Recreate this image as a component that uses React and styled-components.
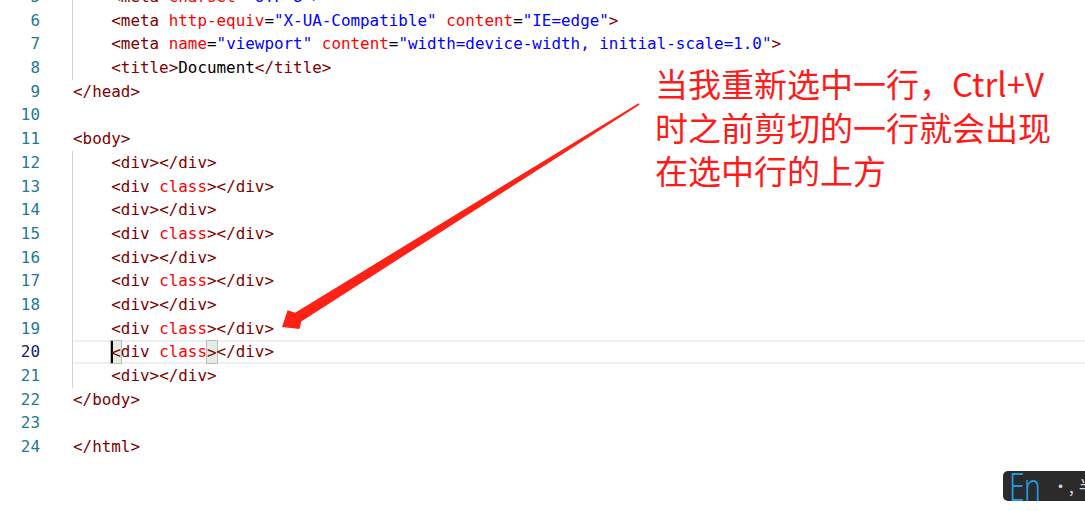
import React from 'react';
import styled, { createGlobalStyle } from 'styled-components';

const LINE_H = 23.7;

const GlobalStyle = createGlobalStyle`
  html, body {
    margin: 0;
    padding: 0;
    background: #ffffff;
  }
`;

// source lines shown in the editor (5 is cut off at the top)
const lines = [
  { n: 5, src: '    <meta charset="UTF-8">', guide: true },
  { n: 6, src: '    <meta http-equiv="X-UA-Compatible" content="IE=edge">', guide: true },
  { n: 7, src: '    <meta name="viewport" content="width=device-width, initial-scale=1.0">', guide: true },
  { n: 8, src: '    <title>Document</title>', guide: true },
  { n: 9, src: '</head>' },
  { n: 10, src: '' },
  { n: 11, src: '<body>' },
  { n: 12, src: '    <div></div>', guide: true },
  { n: 13, src: '    <div class></div>', guide: true },
  { n: 14, src: '    <div></div>', guide: true },
  { n: 15, src: '    <div class></div>', guide: true },
  { n: 16, src: '    <div></div>', guide: true },
  { n: 17, src: '    <div class></div>', guide: true },
  { n: 18, src: '    <div></div>', guide: true },
  { n: 19, src: '    <div class></div>', guide: true },
  { n: 20, src: '', guide: true, current: true },
  { n: 21, src: '    <div></div>', guide: true },
  { n: 22, src: '</body>' },
  { n: 23, src: '' },
  { n: 24, src: '</html>' },
];

const tokenize = (src) => {
  const out = [];
  let inTag = false;
  const re = /(<\/?[a-z]+)|(>)|("[^"]*")|(=)|(\s+)|([^\s="<>]+)/gi;
  let m;
  while ((m = re.exec(src))) {
    if (m[1]) {
      inTag = true;
      out.push({ kind: 'tag', text: m[1] });
    } else if (m[2]) {
      inTag = false;
      out.push({ kind: 'tag', text: m[2] });
    } else if (m[3]) out.push({ kind: 'str', text: m[3] });
    else if (m[4] || m[5]) out.push({ kind: 'plain', text: m[0] });
    else out.push({ kind: inTag ? 'attr' : 'plain', text: m[6] });
  }
  return out;
};

const App = () => (
  <>
    <GlobalStyle />
    <Screen>
      <Editor>
        {lines.map((line) => (
          <Row key={line.n}>
            <LineNo $current={line.current}>{line.n}</LineNo>
            <Code $guide={line.guide} $current={line.current}>
              {line.current ? (
                <>
                  {'    '}
                  <Match $cursor>
                    <Tok $kind="tag">&lt;</Tok>
                  </Match>
                  <Tok $kind="tag">div</Tok>
                  <Tok $kind="plain"> </Tok>
                  <Tok $kind="attr">class</Tok>
                  <Match>
                    <Tok $kind="tag">&gt;</Tok>
                  </Match>
                  <Tok $kind="tag">&lt;/div&gt;</Tok>
                </>
              ) : (
                tokenize(line.src).map((t, i) => (
                  <Tok key={i} $kind={t.kind}>
                    {t.text}
                  </Tok>
                ))
              )}
            </Code>
          </Row>
        ))}
      </Editor>

      <Note>
        当我重新选中一行，Ctrl+V
        <br />
        时之前剪切的一行就会出现
        <br />
        在选中行的上方
      </Note>

      <ArrowLayer viewBox="0 0 1085 511">
        <polygon
          fill="#ff2016"
          points="282,327 299.6,329 301.2,321.4 639.5,104.8 638.5,103.2 295.1,312.7 287.6,310.2"
        />
      </ArrowLayer>

      <Ime>
        <ImeLang>En</ImeLang>
        <ImeMark>·,</ImeMark>
        <ImeMark>半</ImeMark>
      </Ime>
    </Screen>
  </>
);

const Screen = styled.div`
  position: relative;
  width: 100%;
  height: 511px;
  overflow: hidden;
  background: #ffffff;
`;

const Editor = styled.div`
  margin-top: -15px;
  font-family: "DejaVu Sans Mono", "Liberation Mono", monospace;
  font-size: 15.9px;
`;

const Row = styled.div`
  display: flex;
  height: ${LINE_H}px;
  line-height: ${LINE_H}px;
`;

const LineNo = styled.div`
  width: 40px;
  flex: none;
  text-align: right;
  color: ${(p) => (p.$current ? '#0b216f' : '#237893')};
  margin-right: 32px;
`;

const Code = styled.div`
  flex: 1;
  white-space: pre;
  box-sizing: border-box;
  border-left: 1px solid ${(p) => (p.$guide ? '#d3d3d3' : 'transparent')};
  box-shadow: ${(p) =>
    p.$current ? 'inset 0 2px 0 #eeeeee, inset 0 -2px 0 #eeeeee' : 'none'};
`;

const tokColors = {
  tag: '#800000',
  attr: '#ff0000',
  str: '#0000ff',
  plain: '#000000',
};

const Tok = styled.span`
  color: ${(p) => tokColors[p.$kind]};
`;

const Match = styled.span`
  display: inline-block;
  height: ${LINE_H}px;
  vertical-align: top;
  box-sizing: border-box;
  background: #e4ece4;
  border: 1px solid #bcbcbc;
  margin: 0 -1px;
  box-shadow: ${(p) => (p.$cursor ? 'inset 2px 0 0 #000000' : 'none')};
`;

const Note = styled.div`
  position: absolute;
  left: 655px;
  top: 62px;
  font-family: "Noto Sans CJK SC", "Noto Sans", sans-serif;
  font-size: 33px;
  line-height: 43.5px;
  color: #ff1a1a;
  white-space: nowrap;
`;

const ArrowLayer = styled.svg`
  position: absolute;
  left: 0;
  top: 0;
  width: 1085px;
  height: 511px;
  pointer-events: none;
`;

const Ime = styled.div`
  position: absolute;
  left: 1003px;
  top: 471px;
  width: 120px;
  height: 30px;
  display: flex;
  align-items: center;
  gap: 5px;
  padding-left: 6px;
  box-sizing: border-box;
  background: #2b2b2b;
  border-radius: 5px 0 0 5px;
  overflow: hidden;
`;

const ImeLang = styled.span`
  display: inline-block;
  font-family: "Noto Sans", "Open Sans", sans-serif;
  font-size: 38px;
  font-weight: 300;
  line-height: 30px;
  color: #1b9de6;
  transform: scaleX(0.75);
  transform-origin: left center;
  width: 38px;
  letter-spacing: -1px;
`;

const ImeMark = styled.span`
  font-family: "Noto Sans CJK SC", sans-serif;
  font-size: 17px;
  color: #d8d8d8;
  line-height: 30px;
`;

export default App;
